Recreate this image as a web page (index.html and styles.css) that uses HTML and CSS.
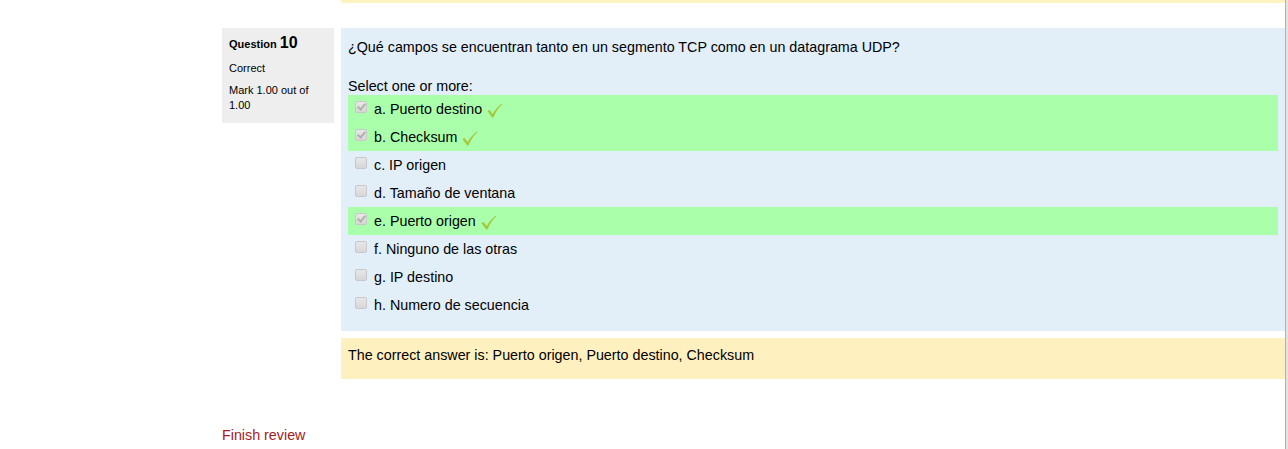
FILE: index.html
```html
<!DOCTYPE html>
<html lang="es">
<head>
<meta charset="utf-8">
<title>Review</title>
<link rel="stylesheet" href="styles.css">
</head>
<body>
<div class="page">
  <main class="main">
    <div class="prev-outcome"></div>
    <div class="que">
      <div class="info">
        <h3 class="no">Question <span class="qno">10</span></h3>
        <div class="state">Correct</div>
        <div class="grade">Mark 1.00 out of 1.00</div>
      </div>
      <div class="content">
        <div class="formulation">
          <div class="qtext">¿Qué campos se encuentran tanto en un segmento TCP como en un datagrama UDP?</div>
          <div class="prompt">Select one or more:</div>
          <div class="answer">
            <div class="opt correct"><span class="cb checked"></span><span class="lbl">a. Puerto destino</span><svg class="tick" viewBox="0 0 16 16"><path d="M1.5 8.6 L3 7.4 L6.3 11.2 C8.5 7.5 11.5 4 15 1.5 L15.5 2.2 C12.2 5 9.3 9 7 14.5 L5.8 14.5 Z"/></svg></div>
            <div class="opt correct"><span class="cb checked"></span><span class="lbl">b. Checksum</span><svg class="tick" viewBox="0 0 16 16"><path d="M1.5 8.6 L3 7.4 L6.3 11.2 C8.5 7.5 11.5 4 15 1.5 L15.5 2.2 C12.2 5 9.3 9 7 14.5 L5.8 14.5 Z"/></svg></div>
            <div class="opt"><span class="cb"></span><span class="lbl">c. IP origen</span></div>
            <div class="opt"><span class="cb"></span><span class="lbl">d. Tamaño de ventana</span></div>
            <div class="opt correct"><span class="cb checked"></span><span class="lbl">e. Puerto origen</span><svg class="tick" viewBox="0 0 16 16"><path d="M1.5 8.6 L3 7.4 L6.3 11.2 C8.5 7.5 11.5 4 15 1.5 L15.5 2.2 C12.2 5 9.3 9 7 14.5 L5.8 14.5 Z"/></svg></div>
            <div class="opt"><span class="cb"></span><span class="lbl">f. Ninguno de las otras</span></div>
            <div class="opt"><span class="cb"></span><span class="lbl">g. IP destino</span></div>
            <div class="opt"><span class="cb"></span><span class="lbl">h. Numero de secuencia</span></div>
          </div>
        </div>
        <div class="outcome">The correct answer is: Puerto origen, Puerto destino, Checksum</div>
      </div>
    </div>
    <div class="finish"><a href="#" class="finish-link">Finish review</a></div>
  </main>
  <div class="edge"></div>
</div>
</body>
</html>
```

FILE: styles.css
```css
html, body {
  margin: 0;
  padding: 0;
  background: #fff;
}
body {
  font-family: "Liberation Sans", Arial, sans-serif;
  color: #000;
  font-size: 14.3px;
}
.page {
  display: flex;
  min-height: 449px;
}
.main {
  flex: 1;
  padding-left: 222px;
}
.edge {
  width: 2px;
  border-left: 1px solid #b4b0ac;
  background: #e6e4e2;
}
.prev-outcome {
  margin-left: 119px;
  height: 3px;
  background: #fff3bf;
}
.que {
  display: flex;
  gap: 7px;
  margin-top: 25px;
}
.info {
  width: 98px;
  flex: none;
  align-self: flex-start;
  background: #eee;
  padding: 6px 7px 10px;
  font-size: 11px;
  line-height: 14px;
}
.no {
  margin: 0 0 8px;
  font-size: 11px;
  font-weight: bold;
  line-height: 18px;
}
.qno {
  font-size: 16px;
}
.state {
  margin-bottom: 8px;
}
.grade {
  line-height: 15px;
}
.content {
  flex: 1;
  display: flex;
  flex-direction: column;
  gap: 7px;
}
.formulation {
  background: #e2eef8;
  padding: 9px 7px 12px;
}
.qtext {
  line-height: 20px;
  margin-bottom: 20px;
}
.prompt {
  line-height: 18px;
}
.opt {
  display: flex;
  align-items: center;
  height: 28px;
  padding-left: 7px;
}
.opt.correct {
  background: #aaffaa;
}
.cb {
  width: 10px;
  height: 10px;
  border: 1px solid #c8c8c8;
  border-radius: 2px;
  background: linear-gradient(#e8e8e8, #d6d6d6);
  margin-right: 7px;
  margin-top: -4px;
  position: relative;
}
.cb.checked::after {
  content: "";
  position: absolute;
  left: 3px;
  top: 0px;
  width: 3px;
  height: 6px;
  border: solid #b0b0b0;
  border-width: 0 2px 2px 0;
  transform: rotate(40deg);
}
.lbl {
  line-height: 20px;
}
.tick {
  width: 17px;
  height: 17px;
  margin-left: 4px;
  margin-top: 2px;
  fill: #a3c93a;
}
.outcome {
  background: #fff1bf;
  padding: 7px 7px 14px;
  line-height: 20px;
}
.finish {
  margin-top: 48px;
}
.finish-link {
  color: #a52121;
  text-decoration: none;
}
```
